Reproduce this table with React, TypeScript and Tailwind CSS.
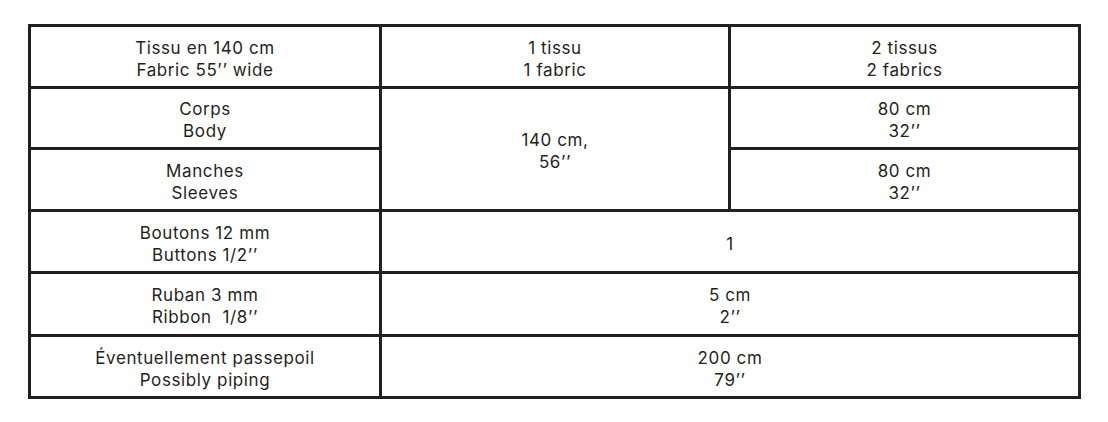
import React from 'react';

const cell =
  'border-[3px] border-[#231f20] text-center align-middle px-2 pt-[4px] leading-[22px] whitespace-pre';

function Two({ a, b }: { a: string; b: string }) {
  return (
    <>
      <div>{a}</div>
      <div>{b}</div>
    </>
  );
}

export default function App() {
  return (
    <div
      className="w-[1108px] h-[422px] bg-white text-[#231f20] text-[17px] tracking-[0.6px] pt-[24px] pl-[28px]"
      style={{ fontFamily: 'Inter, "Noto Sans", sans-serif' }}
    >
      <table className="w-[1050px] border-collapse table-fixed">
        <colgroup>
          <col className="w-[351px]" />
          <col className="w-[349px]" />
          <col className="w-[350px]" />
        </colgroup>
        <tbody>
          <tr className="h-[62px]">
            <td className={cell}>
              <Two a="Tissu en 140 cm" b="Fabric 55’’ wide" />
            </td>
            <td className={cell}>
              <Two a="1 tissu" b="1 fabric" />
            </td>
            <td className={cell}>
              <Two a="2 tissus" b="2 fabrics" />
            </td>
          </tr>
          <tr className="h-[61px]">
            <td className={cell}>
              <Two a="Corps" b="Body" />
            </td>
            <td className={cell} rowSpan={2}>
              <Two a="140 cm," b="56’’" />
            </td>
            <td className={cell}>
              <Two a="80 cm" b="32’’" />
            </td>
          </tr>
          <tr className="h-[62px]">
            <td className={cell}>
              <Two a="Manches" b="Sleeves" />
            </td>
            <td className={cell}>
              <Two a="80 cm" b="32’’" />
            </td>
          </tr>
          <tr className="h-[62px]">
            <td className={cell}>
              <Two a="Boutons 12 mm" b="Buttons 1/2’’" />
            </td>
            <td className={cell} colSpan={2}>
              1
            </td>
          </tr>
          <tr className="h-[63px]">
            <td className={cell}>
              <Two a="Ruban 3 mm" b="Ribbon  1/8’’" />
            </td>
            <td className={cell} colSpan={2}>
              <Two a="5 cm" b="2’’" />
            </td>
          </tr>
          <tr className="h-[62px]">
            <td className={cell}>
              <Two a="Éventuellement passepoil" b="Possibly piping" />
            </td>
            <td className={cell} colSpan={2}>
              <Two a="200 cm" b="79’’" />
            </td>
          </tr>
        </tbody>
      </table>
    </div>
  );
}
